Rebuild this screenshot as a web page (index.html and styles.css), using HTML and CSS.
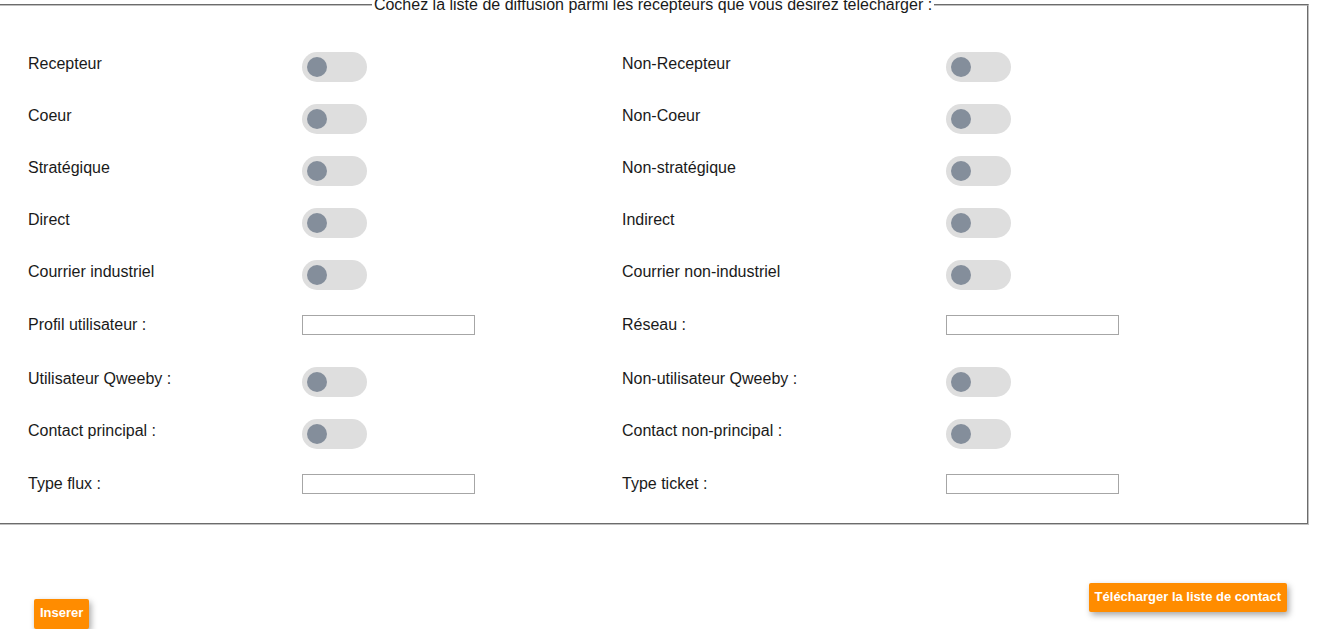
FILE: index.html
```html
<!DOCTYPE html>
<html lang="fr">
<head>
<meta charset="utf-8">
<title>Liste de diffusion</title>
<link rel="stylesheet" href="styles.css">
</head>
<body>
<fieldset class="panel">
  <legend class="panel-title">Cochez la liste de diffusion parmi les recepteurs que vous desirez telecharger :</legend>

  <div class="row">
    <span class="label">Recepteur</span><span class="toggle"><span class="knob"></span></span>
    <span class="label">Non-Recepteur</span><span class="toggle"><span class="knob"></span></span>
  </div>
  <div class="row">
    <span class="label">Coeur</span><span class="toggle"><span class="knob"></span></span>
    <span class="label">Non-Coeur</span><span class="toggle"><span class="knob"></span></span>
  </div>
  <div class="row">
    <span class="label">Stratégique</span><span class="toggle"><span class="knob"></span></span>
    <span class="label">Non-stratégique</span><span class="toggle"><span class="knob"></span></span>
  </div>
  <div class="row">
    <span class="label">Direct</span><span class="toggle"><span class="knob"></span></span>
    <span class="label">Indirect</span><span class="toggle"><span class="knob"></span></span>
  </div>
  <div class="row">
    <span class="label">Courrier industriel</span><span class="toggle"><span class="knob"></span></span>
    <span class="label">Courrier non-industriel</span><span class="toggle"><span class="knob"></span></span>
  </div>
  <div class="row row-input">
    <span class="label">Profil utilisateur :</span><input class="field" type="text">
    <span class="label">Réseau :</span><input class="field" type="text">
  </div>
  <div class="row">
    <span class="label">Utilisateur Qweeby :</span><span class="toggle"><span class="knob"></span></span>
    <span class="label">Non-utilisateur Qweeby :</span><span class="toggle"><span class="knob"></span></span>
  </div>
  <div class="row">
    <span class="label">Contact principal :</span><span class="toggle"><span class="knob"></span></span>
    <span class="label">Contact non-principal :</span><span class="toggle"><span class="knob"></span></span>
  </div>
  <div class="row row-input row-last">
    <span class="label">Type flux :</span><input class="field" type="text">
    <span class="label">Type ticket :</span><input class="field" type="text">
  </div>
</fieldset>

<div class="actions">
  <button class="btn btn-insert" type="button">Inserer</button>
  <button class="btn btn-download" type="button">Télécharger la liste de contact</button>
</div>
</body>
</html>
```

FILE: styles.css
```css
html, body {
  margin: 0;
  padding: 0;
  background: #ffffff;
}

body {
  font-family: "Liberation Sans", Arial, sans-serif;
  font-size: 16px;
  color: #1a1a1a;
  overflow: hidden;
}

.panel {
  margin: -4px 19px 0 -3px;
  padding: 38px 0 29px 0;
  border: 2px groove rgb(192, 192, 192);
  min-width: 0;
}

.panel-title {
  margin: 0 auto;
  padding: 0 2px;
  font-size: 16px;
  color: #1a1a1a;
}

.row {
  display: grid;
  grid-template-columns: 274px 320px 324px 1fr;
  align-items: start;
  height: 52px;
  padding-left: 29px;
}

.row-input {
  height: 55px;
  padding-top: 3px;
  box-sizing: border-box;
}

.row-last {
  height: auto;
}

.label {
  display: block;
  line-height: 18px;
  margin-top: 3px;
}

.row-input .label {
  margin-top: 1px;
}

.toggle {
  display: flex;
  align-items: center;
  width: 65px;
  height: 30px;
  border-radius: 15px;
  background: #dedede;
  padding-left: 5px;
  box-sizing: border-box;
}

.knob {
  width: 20px;
  height: 20px;
  border-radius: 50%;
  background: #848e9b;
}

.field {
  width: 173px;
  height: 20px;
  box-sizing: border-box;
  border: 1px solid #a6a6a6;
  margin: 0;
  padding: 0 2px;
  font: inherit;
  font-size: 13px;
  background: #fff;
}

.actions {
  display: flex;
  justify-content: space-between;
  align-items: flex-start;
  margin-top: 58px;
  padding: 0 41px 0 34px;
}

.btn {
  font-family: "Liberation Sans", Arial, sans-serif;
  font-size: 13px;
  font-weight: bold;
  color: #ffffff;
  background: #ff8c00;
  border: none;
  border-radius: 2px;
  box-sizing: border-box;
  padding: 0 6px 2px;
  height: 29px;
  line-height: 27px;
  box-shadow: 2px 3px 6px rgba(0, 0, 0, 0.35);
  cursor: pointer;
}

.btn-insert {
  margin-top: 16px;
  height: 30px;
  line-height: 28px;
}
```
